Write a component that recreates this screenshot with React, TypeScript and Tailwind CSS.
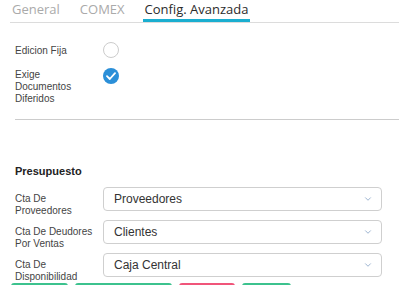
import { ChevronDown } from "lucide-react";

const Select = ({ value }: { value: string }) => (
  <div className="flex h-[24px] w-[279px] items-center justify-between rounded-[4px] border border-[#cfcfcf] bg-white pl-[10px] pr-[8px]">
    <span className="text-[12px] leading-[14px] text-[#333]">{value}</span>
    <ChevronDown size={10} strokeWidth={2} className="text-[#8aa6c8]" />
  </div>
);

const Row = ({ label, value }: { label: string[]; value: string }) => (
  <div className="flex h-[24px] items-start">
    <div className="mt-[6px] w-[88px] text-[10px] leading-[12px] text-[#444]">
      {label.map((l) => (
        <div key={l}>{l}</div>
      ))}
    </div>
    <Select value={value} />
  </div>
);

export default function App() {
  return (
    <div className="h-[285px] w-[399px] overflow-hidden bg-white font-['Liberation_Sans',Arial,sans-serif]">
      <div className="ml-[10px] flex h-[23px] items-end border-b border-[#dcdcdc] font-['Open_Sans',sans-serif] text-[13px]">
        <div className="pb-[3px] pl-[2px] pr-[20px] text-[#aaaaaa]">General</div>
        <div className="pb-[3px] pr-[18px] text-[#aaaaaa]">COMEX</div>
        <div className="border-b-[3px] border-[#1aaed0] px-[2px] text-[#2b2b2b]">Config. Avanzada</div>
      </div>

      <div className="px-[15px]">
        <div className="mt-[19px] flex items-center">
          <div className="w-[88px] text-[10px] text-[#444]">Edicion Fija</div>
          <div className="h-[16px] w-[16px] rounded-full border border-[#cccccc] bg-white" />
        </div>

        <div className="mt-[11px] flex items-start">
          <div className="w-[88px] text-[10px] leading-[12px] text-[#444]">
            <div>Exige</div>
            <div>Documentos</div>
            <div>Diferidos</div>
          </div>
          <div className="-mt-[1px] flex h-[16px] w-[16px] items-center justify-center rounded-full bg-[#2b8fd8]">
            <svg width="10" height="8" viewBox="0 0 10 8">
              <path d="M1 4.2 L3.8 7 L9 1.2" fill="none" stroke="white" strokeWidth="1.8" strokeLinecap="round" strokeLinejoin="round" />
            </svg>
          </div>
        </div>
      </div>

      <div className="ml-[15px] mt-[14px] border-t border-[#cccccc]" />

      <div className="px-[15px]">
        <div className="mt-[43px] text-[11px] font-bold text-[#222]">Presupuesto</div>
        <div className="mt-[7px] flex flex-col gap-[9px]">
          <Row label={["Cta De", "Proveedores"]} value="Proveedores" />
          <Row label={["Cta De Deudores", "Por Ventas"]} value="Clientes" />
          <Row label={["Cta De", "Disponibilidad"]} value="Caja Central" />
        </div>
      </div>

      <div className="ml-[11px] mt-[6px] flex gap-[7px]">
        <div className="h-[10px] w-[57px] rounded-t-[3px] bg-[#3cc28e]" />
        <div className="h-[10px] w-[97px] rounded-t-[3px] bg-[#3cc28e]" />
        <div className="h-[10px] w-[56px] rounded-t-[3px] bg-[#f0557a]" />
        <div className="h-[10px] w-[49px] rounded-t-[3px] bg-[#3cc28e]" />
      </div>
    </div>
  );
}
